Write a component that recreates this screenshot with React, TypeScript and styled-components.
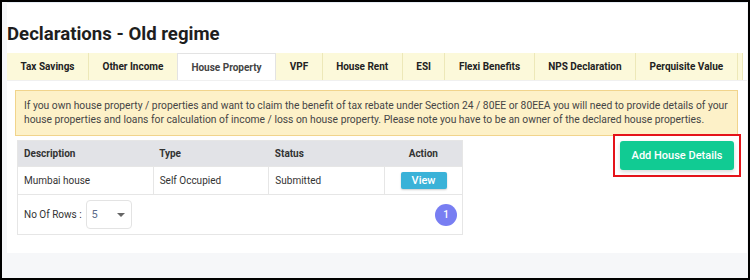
import React, { FC } from "react"
import styled, { createGlobalStyle } from "styled-components"

const GlobalStyle = createGlobalStyle`
  html, body {
    margin: 0;
    padding: 0;
    background: #fff;
  }
  body {
    font-family: Roboto, "Liberation Sans", sans-serif;
    color: #333;
  }
  * {
    box-sizing: border-box;
  }
`

const Frame = styled.div`
  width: 750px;
  height: 280px;
  border: 2px solid #000;
  background: #f6f7f9;
  display: flex;
  flex-direction: column;
  overflow: hidden;
`

const Card = styled.div`
  background: #fff;
  margin: 0 1px 0 5px;
  border-top: 1px solid #e6edf5;
  padding-top: 2px;
  height: 251px;
`

const Title = styled.h1`
  margin: 0;
  padding: 17px 0 0;
  height: 48px;
  font-size: 18.6px;
  font-weight: 700;
  color: #1e1e1e;
  line-height: 24px;
`

const TabStrip = styled.div`
  display: flex;
  height: 28px;
  border-bottom: 1px solid #f0f0f0;
`

const Tab = styled.div<{ $active?: boolean }>`
  display: flex;
  align-items: center;
  padding: 0 13.5px;
  white-space: nowrap;
  font-size: 10px;
  font-weight: 700;
  color: ${({ $active }) => ($active ? "#444" : "#222")};
  background: ${({ $active }) => ($active ? "#fff" : "#fcf9da")};
  border-right: 1px solid #ede8b8;
  ${({ $active }) =>
    $active &&
    `
    border: 1px solid #e3e3e3;
    border-bottom: none;
    margin-left: -1px;
  `}
`

const TabStub = styled.div`
  width: 5px;
  background: #fcf9da;
  border-right: 1px solid #ede8b8;
`

const Content = styled.div`
  padding: 9px 9px 0 8px;
`

const Alert = styled.div`
  background: #fdf1c8;
  border: 1px solid #f1d48c;
  padding: 8px 8px;
  font-size: 10.3px;
  line-height: 14px;
  color: #454545;
`

const Row = styled.div`
  display: flex;
  justify-content: space-between;
  align-items: flex-start;
  margin-top: 4px;
`

const Table = styled.table`
  margin-left: 2px;
  width: 446px;
  border-collapse: collapse;
  font-size: 10px;
  border: 1px solid #e6e6e6;
`

const Th = styled.th<{ $w: number }>`
  width: ${({ $w }) => $w}px;
  height: 26px;
  background: #e2e3e7;
  text-align: left;
  padding: 0 6px;
  font-weight: 700;
  color: #333;
`

const ThCenter = styled(Th)`
  text-align: center;
`

const Td = styled.td`
  height: 28px;
  padding: 0 6px;
  border: 1px solid #e6e6e6;
  color: #333;
`

const TdCenter = styled(Td)`
  text-align: center;
`

const ViewButton = styled.button`
  display: block;
  margin: -1px auto 0;
  font-family: inherit;
  font-size: 11px;
  font-weight: 500;
  color: #fff;
  background: #3ab2d8;
  border: none;
  border-radius: 2px;
  width: 46px;
  height: 17px;
  padding: 0;
  box-shadow: 0 1px 2px rgba(0, 0, 0, 0.2);
`

const FooterCell = styled.td`
  height: 40px;
  padding: 0 6px;
`

const FooterInner = styled.div`
  display: flex;
  align-items: center;
  justify-content: space-between;
`

const RowsLabel = styled.div`
  display: flex;
  align-items: center;
  gap: 4px;
  font-size: 10px;
  color: #333;
`

const Select = styled.div`
  width: 46px;
  height: 29px;
  border: 1px solid #e3e3e3;
  border-radius: 4px;
  display: flex;
  align-items: center;
  justify-content: space-between;
  padding: 0 6px 0 5px;
  font-size: 11px;
  color: #5a6b8a;
`

const Caret = styled.span`
  width: 0;
  height: 0;
  border-left: 4px solid transparent;
  border-right: 4px solid transparent;
  border-top: 4px solid #666;
`

const PageDot = styled.div`
  width: 22px;
  height: 22px;
  border-radius: 50%;
  background: #787ef2;
  color: #fff;
  font-size: 10px;
  font-weight: 500;
  display: flex;
  align-items: center;
  justify-content: center;
  margin-right: -1px;
`

const Highlight = styled.div`
  border: 2px solid #e5131a;
  padding: 5px;
  margin: -6px -3px 0 0;
`

const AddButton = styled.button`
  display: block;
  width: 114px;
  height: 29px;
  background: #11cb93;
  color: #fff;
  font-family: inherit;
  font-size: 11px;
  font-weight: 500;
  white-space: nowrap;
  border: none;
  border-radius: 3px;
  box-shadow: 0 2px 4px rgba(0, 0, 0, 0.15);
`

const tabs = [
  "Tax Savings",
  "Other Income",
  "House Property",
  "VPF",
  "House Rent",
  "ESI",
  "Flexi Benefits",
  "NPS Declaration",
  "Perquisite Value",
]

const App: FC = () => (
  <>
    <GlobalStyle />
    <Frame>
      <Card>
        <Title>Declarations - Old regime</Title>
        <TabStrip>
          {tabs.map(t => (
            <Tab key={t} $active={t === "House Property"}>
              {t}
            </Tab>
          ))}
          <TabStub />
        </TabStrip>
        <Content>
          <Alert>
            If you own house property / properties and want to claim the benefit of tax rebate
            under Section 24 / 80EE or 80EEA you will need to provide details of your house
            properties and loans for calculation of income / loss on house property. Please note
            you have to be an owner of the declared house properties.
          </Alert>
          <Row>
            <Table>
              <thead>
                <tr>
                  <Th $w={136}>Description</Th>
                  <Th $w={116}>Type</Th>
                  <Th $w={116}>Status</Th>
                  <ThCenter $w={78}>Action</ThCenter>
                </tr>
              </thead>
              <tbody>
                <tr>
                  <Td>Mumbai house</Td>
                  <Td>Self Occupied</Td>
                  <Td>Submitted</Td>
                  <TdCenter>
                    <ViewButton>View</ViewButton>
                  </TdCenter>
                </tr>
                <tr>
                  <FooterCell colSpan={4}>
                    <FooterInner>
                      <RowsLabel>
                        No Of Rows :
                        <Select>
                          5
                          <Caret />
                        </Select>
                      </RowsLabel>
                      <PageDot>1</PageDot>
                    </FooterInner>
                  </FooterCell>
                </tr>
              </tbody>
            </Table>
            <Highlight>
              <AddButton>Add House Details</AddButton>
            </Highlight>
          </Row>
        </Content>
      </Card>
    </Frame>
  </>
)

export default App
